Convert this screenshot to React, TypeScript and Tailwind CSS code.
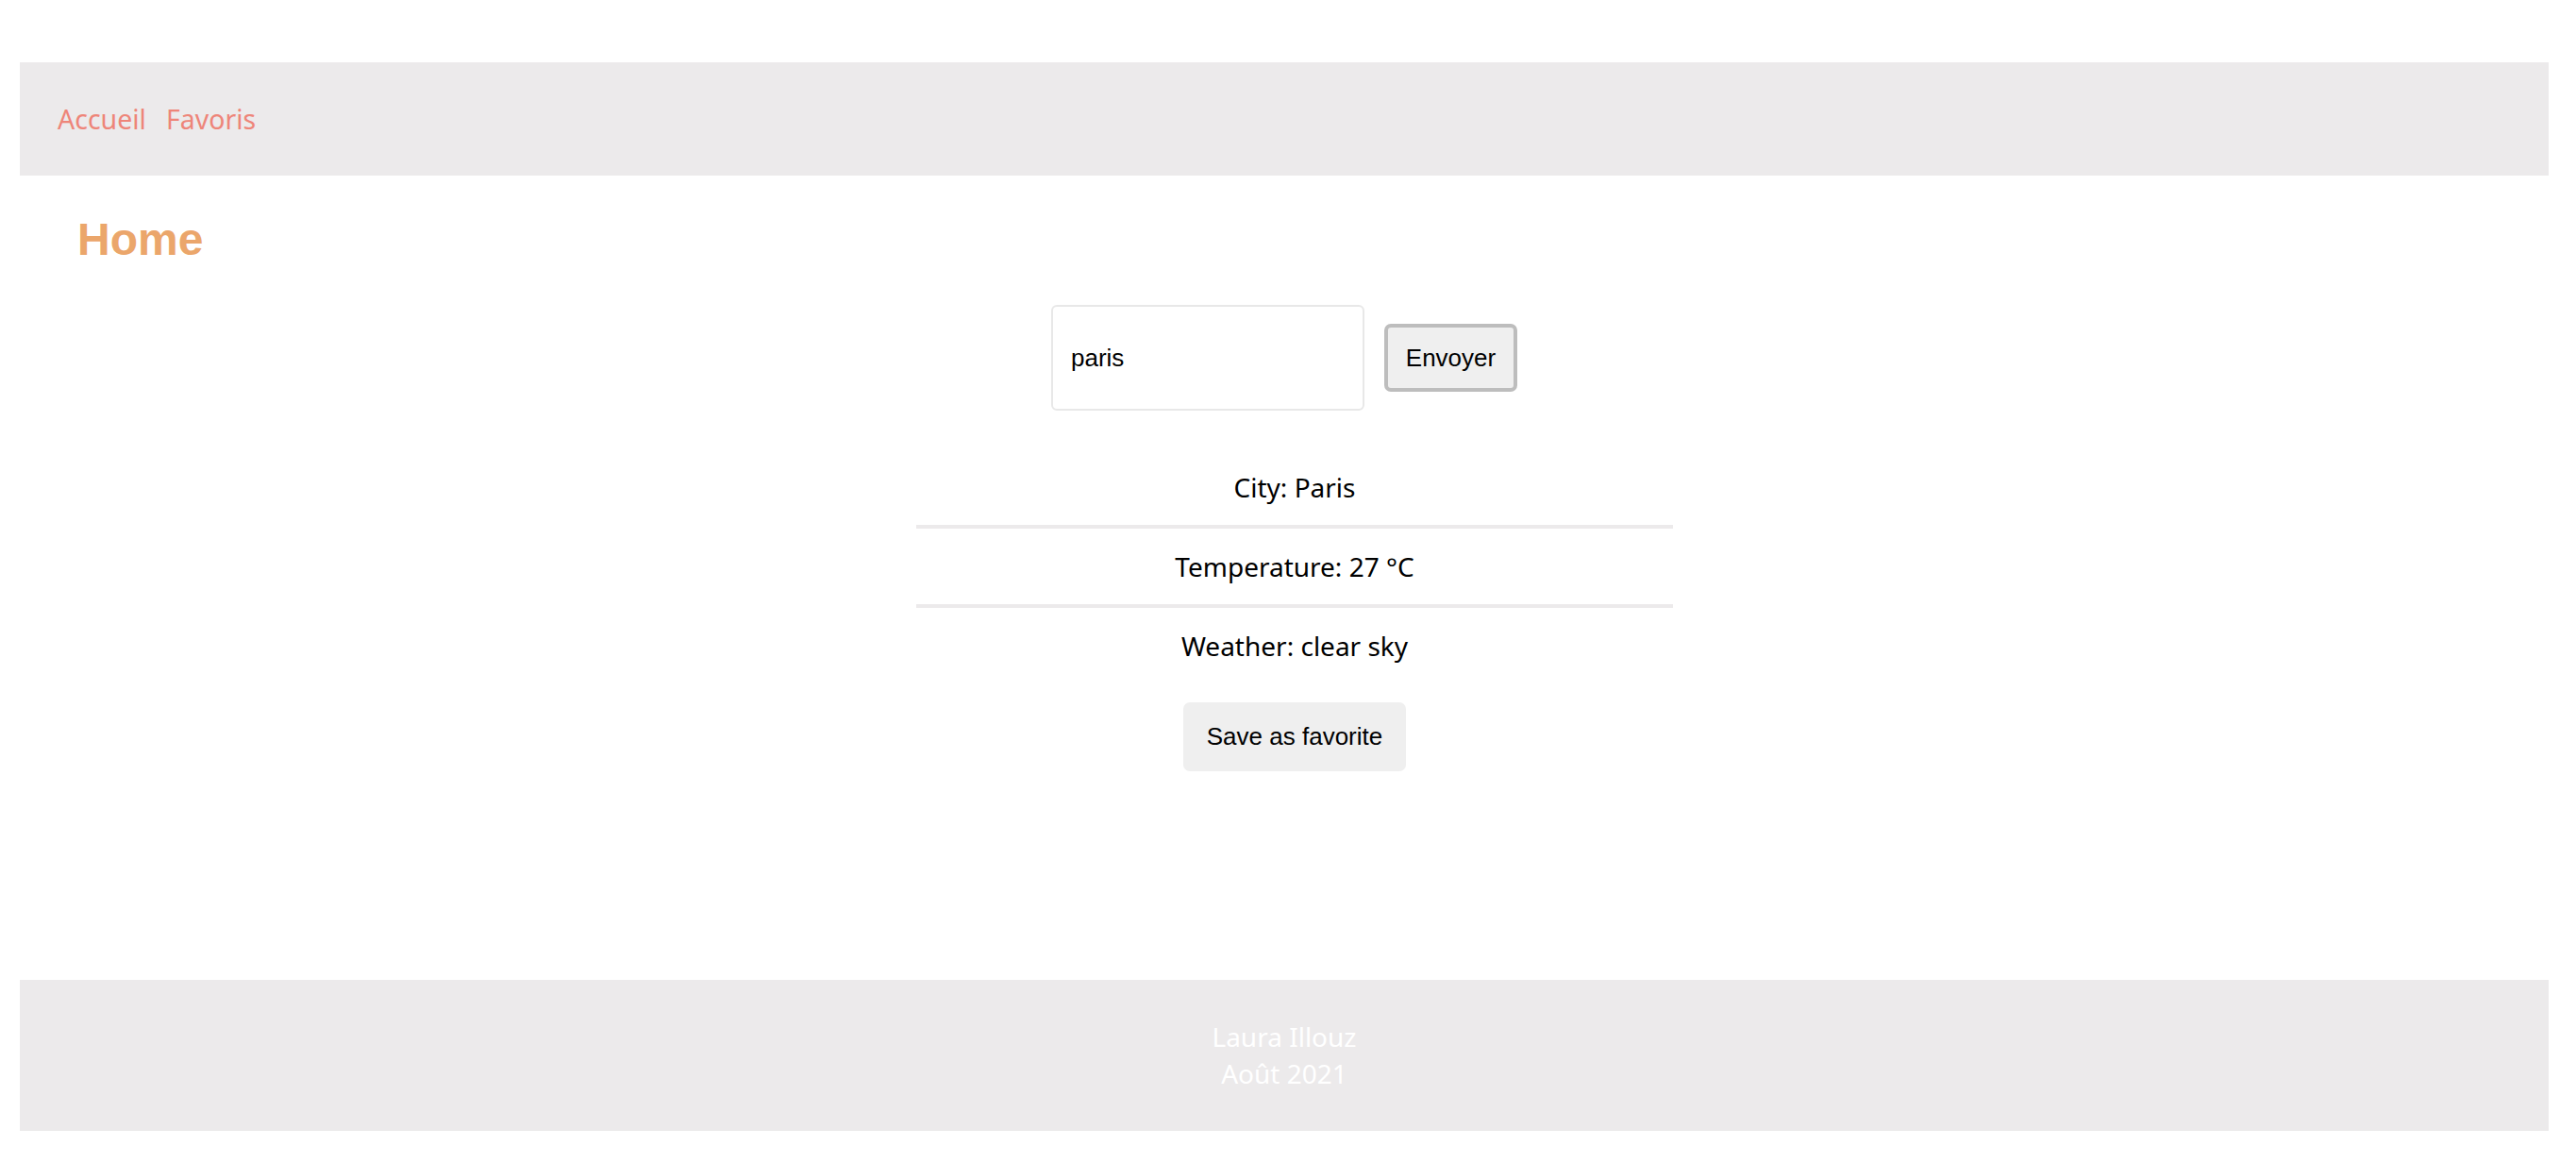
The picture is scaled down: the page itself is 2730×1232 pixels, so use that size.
import { useState } from "react";

const rows = [
  { label: "City", value: "Paris" },
  { label: "Temperature", value: "27 °C" },
  { label: "Weather", value: "clear sky" },
];

export default function App() {
  const [city, setCity] = useState("paris");

  return (
    <div className="flex min-h-screen flex-col bg-white pt-[66px] pr-[29px] pb-[34px] pl-[21px] font-['Noto_Sans',sans-serif]">
      <header className="flex h-[120px] items-center gap-[21px] bg-[#eceaeb] pl-[40px] text-[28.5px] leading-[40px] text-[#ee8579]">
        <a href="#">Accueil</a>
        <a href="#">Favoris</a>
      </header>

      <main className="flex-1">
        <h1 className="mt-[40px] pl-[61px] font-['Liberation_Sans',Arial,sans-serif] text-[48px] leading-[56px] font-bold text-[#eba66b]">
          Home
        </h1>

        <form
          className="mt-[41px] flex items-center justify-center gap-[21px] font-['Liberation_Sans',Arial,sans-serif] text-[26px]"
          onSubmit={(e) => e.preventDefault()}
        >
          <input
            value={city}
            onChange={(e) => setCity(e.target.value)}
            className="h-[112px] w-[332px] rounded-[6px] border-2 border-[#e8e8e8] bg-white pl-[19px] text-black outline-none"
          />
          <button
            type="submit"
            className="h-[72px] w-[141px] rounded-[7px] border-4 border-[#bdbdbd] bg-[#efefef] text-black"
          >
            Envoyer
          </button>
        </form>

        <div className="mt-[41px] ml-[22px] flex flex-col items-center">
          <div className="w-[802px] text-center text-[28px] leading-[40px] text-black">
            {rows.map((r, i) => (
              <div
                key={r.label}
                className={i < rows.length - 1 ? "border-b-4 border-[#eceaeb] py-5" : "py-5"}
              >
                {r.label}: {r.value}
              </div>
            ))}
          </div>
          <button
            type="button"
            className="mt-5 h-[73px] w-[236px] rounded-[7px] bg-[#efefef] font-['Liberation_Sans',Arial,sans-serif] text-[26px] text-black"
          >
            Save as favorite
          </button>
        </div>
      </main>

      <footer className="flex h-[160px] flex-col items-center justify-center bg-[#eceaeb] text-[28px] leading-[39px] text-white">
        <span>Laura Illouz</span>
        <span>Août 2021</span>
      </footer>
    </div>
  );
}
